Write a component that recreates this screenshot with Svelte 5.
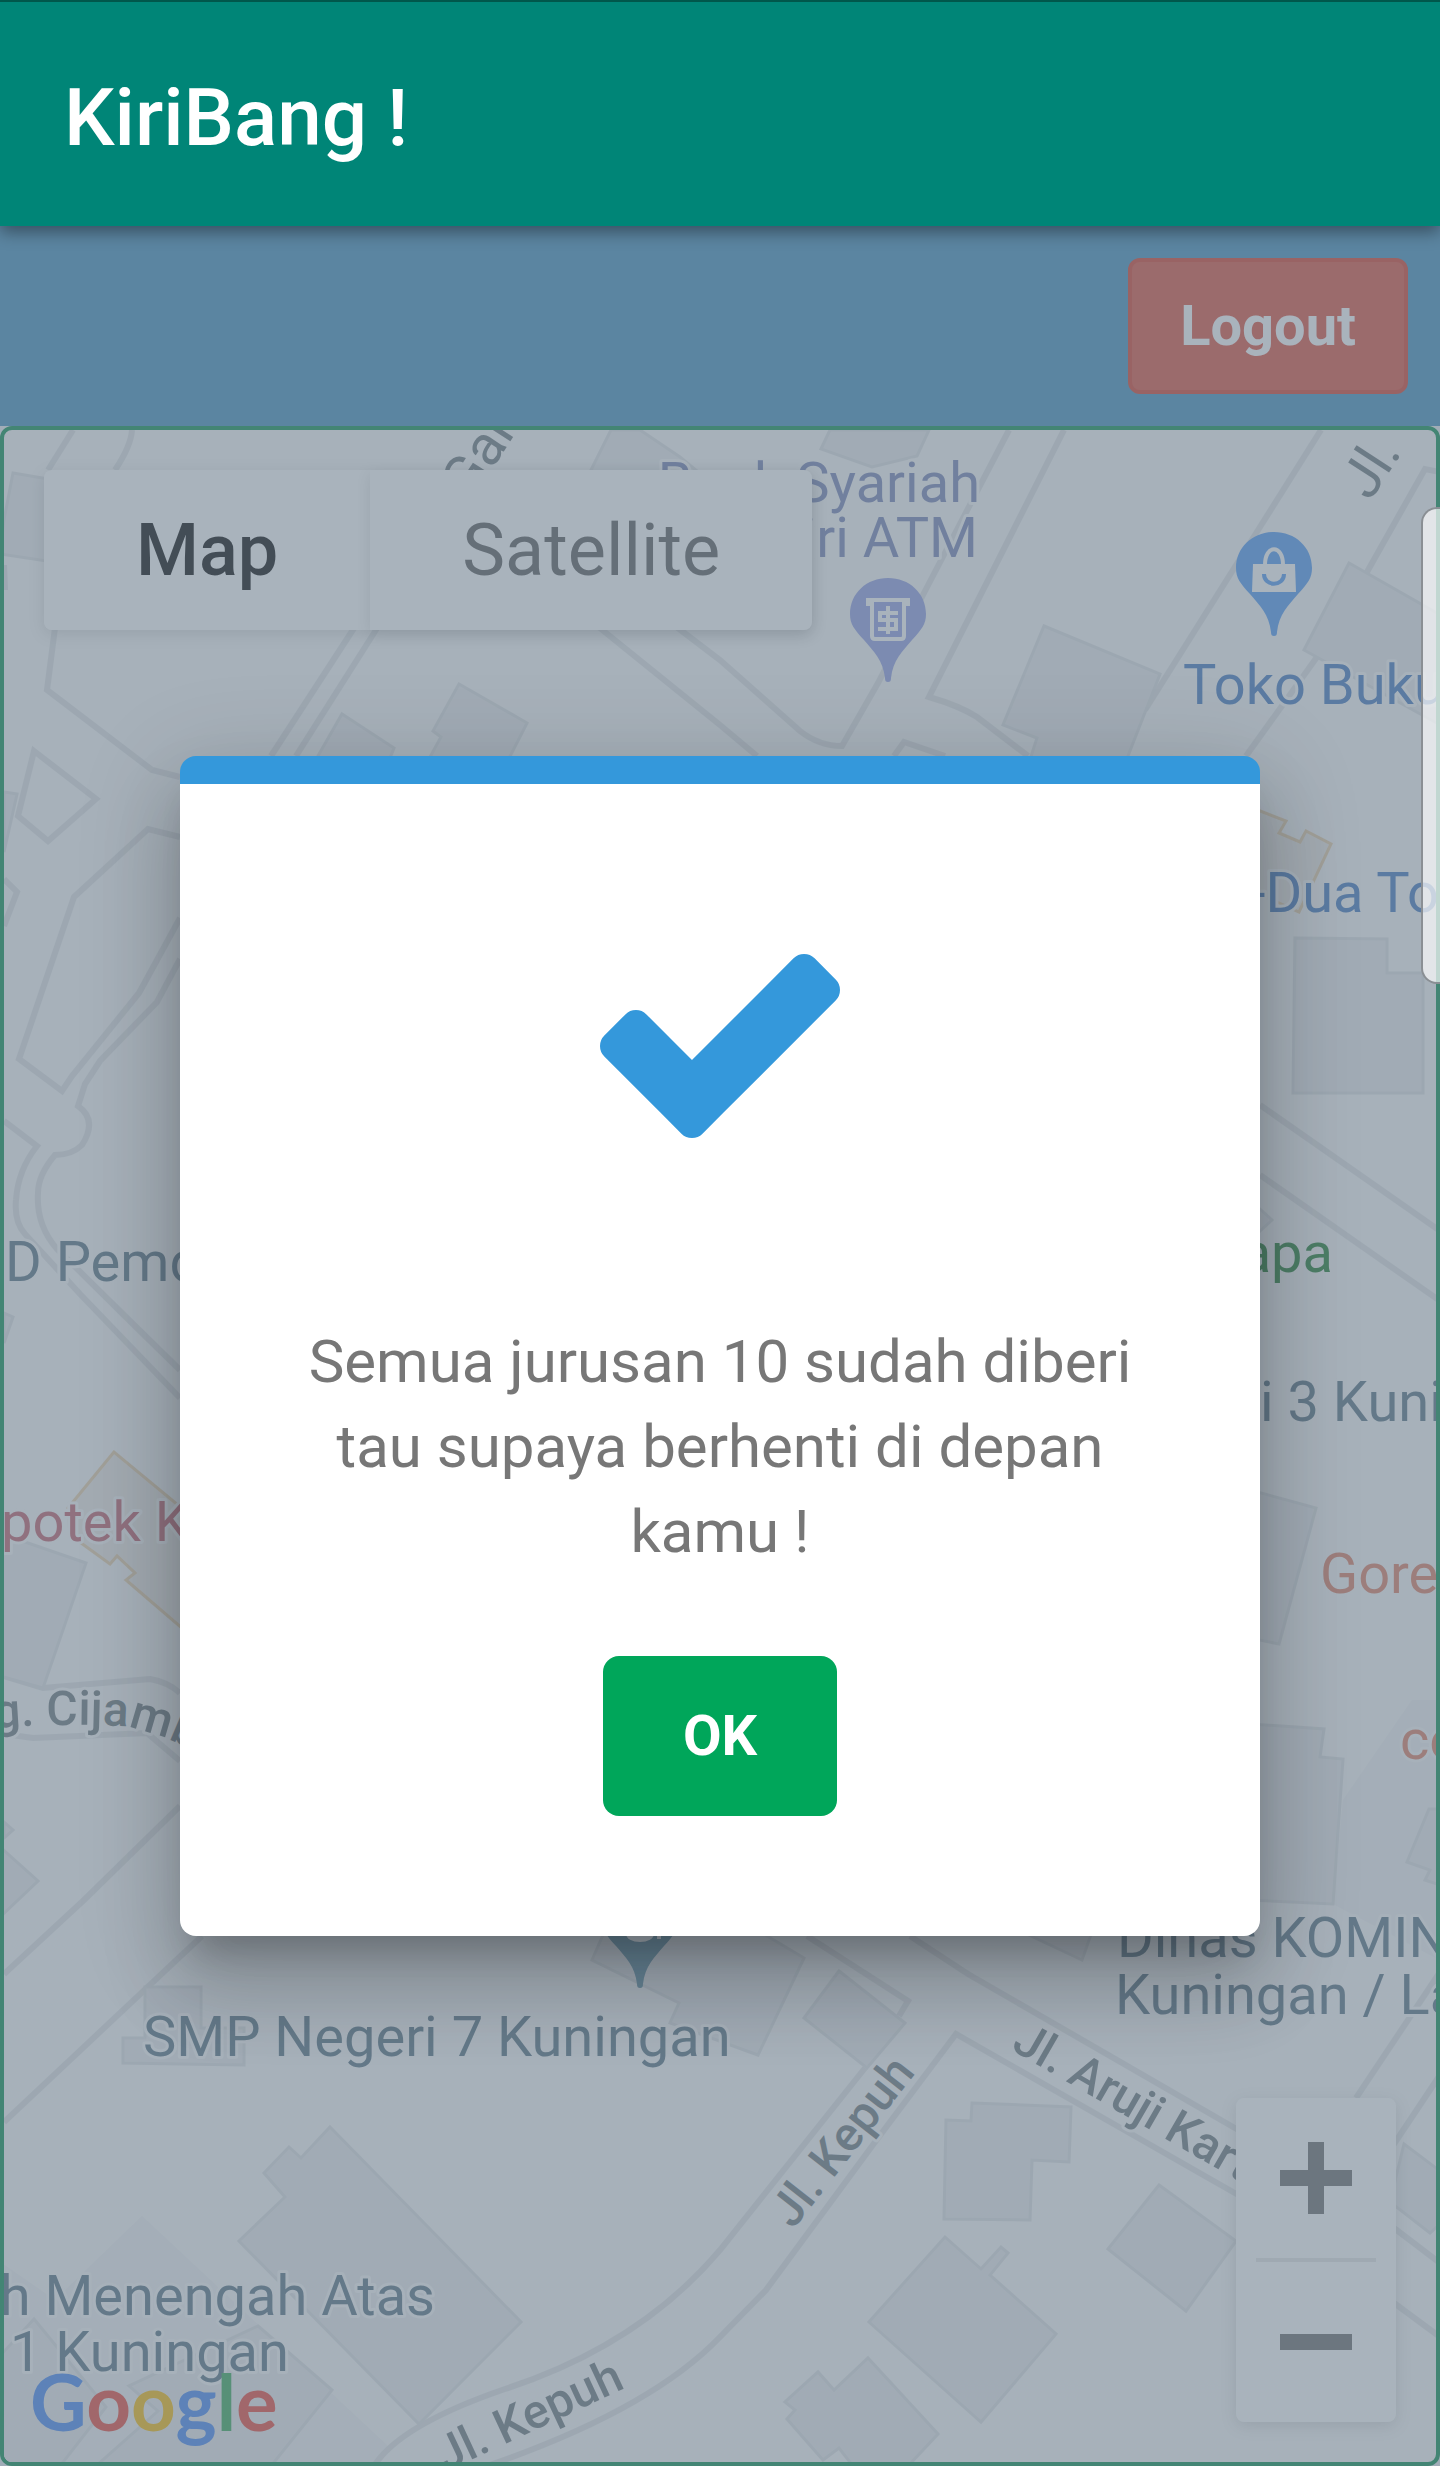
<script lang="ts">
    let dialogOpen = true;
    let mapType = 'Map';

    const mapTypes = ['Map', 'Satellite'];

    const areas = [
        '142,2216 390,2448 374,2466 0,2466 0,2262 55,2300',
        '1440,1700 1412,1700 1343,1800 1333,1904 1440,1960',
    ];

    const roads = [
        'M73 430L48 470',
        'M132 430Q131 446 115 470',
        'M4 565L5 590',
        'M56 620L47 690L152 770L180 777',
        'M34 751L96 799L48 841L18 816Z',
        'M4 879L17 892L4 926',
        'M180 837L148 829L74 897L19 1059L62 1091L72 1076L139 993L180 918',
        'M180 959L157 1002L100 1061L85 1084L78 1106Q98 1120 82 1145Q72 1155 55 1155Q38 1175 38 1193Q36 1225 57 1249L133 1324L180 1370',
        'M4 1121L37 1146Q18 1170 16 1200Q14 1222 25 1234L80 1294L180 1398',
        'M4 1676L43 1688L150 1679Q168 1682 180 1693',
        'M4 1734L33 1738L147 1733L180 1761',
        'M180 1806L84 1900L4 1974',
        'M202 1936L4 2122',
        'M358 622L271 756',
        'M381 622L296 756',
        'M590 620L720 725L757 756',
        'M670 622L720 660L800 731Q819 746 842 746L878 683L924 593L1009 430',
        'M1064 430L929 697Q960 706 977 717L1028 756',
        'M894 756L904 742L945 756',
        'M1321 430L1145 710',
        'M1440 472L1425 469L1367 572',
        'M1317 657L1246 756',
        'M1260 1105L1440 1231',
        'M1260 1175L1440 1301',
        'M807 1936L908 2001L899 2016',
        'M865 2068L720 2250Q640 2345 505 2389Q400 2425 374 2466',
        'M487 2466Q650 2410 720 2337L766 2290L878 2138L956 2034L1119 2127L1240 2196',
        'M910 1936L968 1974L1240 2131',
        'M1440 1972L1356 2098',
        'M1440 2075L1390 2150',
        'M1390 2225L1440 2263',
        'M1390 2300L1440 2337',
    ];

    const buildings = [
        '13,473 60,481 60,563 0,554 4,520',
        '4,792 17,794 4,852',
        '4,1313 13,1317 4,1343',
        '25,1542 86,1563 43,1688 0,1676 0,1538',
        '4,1822 13,1830 4,1838',
        '0,1847 38,1881 0,1917',
        '342,714 394,748 385,770 310,770',
        '459,684 527,723 503,770 423,770 441,737 433,731',
        '611,430 581,490 720,490 680,457 640,430',
        '830,430 821,449 872,467 917,456 929,430',
        '1044,626 1160,674 1124,766 1028,766 1037,738 1003,725',
        '1349,563 1444,617 1444,727 1304,650',
        '1295,938 1387,939 1387,973 1423,973 1423,1093 1293,1093',
        '1250,1200 1272,1220 1250,1240',
        '1250,1490 1316,1508 1279,1644 1250,1638',
        '1250,1724 1324,1729 1320,1757 1343,1759 1333,1904 1250,1900',
        '1440,1809 1429,1809 1407,1862 1430,1870 1425,1880 1440,1885',
        '607,1926 592,1960 679,2003 670,2023 758,2055 804,1958 750,1926',
        '839,1971 905,2023 867,2068 804,2018',
        '1010,1926 1082,1960 1094,1926',
        '972,2103 1071,2107 1069,2162 1032,2160 1030,2220 944,2219 946,2120 971,2121',
        '945,2237 981,2269 1001,2247 1008,2253 990,2275 1056,2334 981,2422 869,2322',
        '1159,2185 1236,2241 1186,2311 1108,2249',
        '868,2358 938,2434 908,2466 853,2466 839,2448 823,2460 787,2419 795,2410 785,2402 818,2372 834,2390',
        '1404,2144 1444,2174 1444,2220 1430,2233 1390,2202',
        '145,1987 201,1987 201,2028 244,2028 244,2065 123,2063 123,2038 145,2038',
        '330,2127 521,2322 419,2424 239,2241 285,2197 264,2173 289,2147 301,2158',
        '34,2319 106,2407 60,2466 0,2466 0,2356',
        '258,2326 332,2390 271,2466 96,2466 158,2411 129,2386',
    ];

    const shops = [
        '114,1452 68,1508 70,1535 88,1548 110,1564 117,1556 135,1573 126,1580 190,1635 190,1515',
        '1250,807 1286,821 1279,833 1300,842 1306,831 1331,844 1299,912 1250,890',
    ];

    const pinShape =
        'M0 104C-2 104-3 103-3 100C-5 82-14 74-24 62C-34 51-38 46-38 36C-38 15-21 0 0 0S38 15 38 36C38 46 34 51 24 62C14 74 5 82 3 100C3 103 2 104 0 104Z';

    function closeDialog() {
        dialogOpen = false;
    }
</script>

<div class="app">
    <header class="toolbar">
        <h1>KiriBang !</h1>
    </header>

    <main class="content">
        <nav class="navbar">
            <button class="logout" type="button">Logout</button>
        </nav>

        <section class="map" aria-label="Map">
            <svg class="tiles" viewBox="4 430 1432 2032" preserveAspectRatio="xMidYMid slice">
                {#each areas as points}
                    <polygon class="area" {points} />
                {/each}
                {#each roads as d}
                    <path class="road" {d} />
                {/each}
                {#each buildings as points}
                    <polygon class="building" {points} />
                {/each}
                {#each shops as points}
                    <polygon class="shop" {points} />
                {/each}

                <g class="label street">
                    <text class="wide" transform="translate(471 502) rotate(-57)">Gar</text>
                    <text class="wide" transform="translate(1370 502) rotate(-57)">Jl.</text>
                    <text transform="translate(793 2230) rotate(-52)">Jl. Kepuh</text>
                    <text transform="translate(1010 2049) rotate(30)">Jl. Aruji Kart</text>
                    <text transform="translate(445 2472) rotate(-25)">Jl. Kepuh</text>
                    <path id="cijambu" d="M-6 1728Q60 1723 120 1726Q160 1732 210 1758" fill="none" stroke="none" />
                    <text><textPath href="#cijambu">g. Cijamb</textPath></text>
                </g>

                <g class="label">
                    <text class="bank" x="980" y="502" text-anchor="end">Bank Syariah</text>
                    <text class="bank" x="978" y="557" text-anchor="end">Mandiri ATM</text>
                    <text class="store" x="1183" y="704">Toko Buku</text>
                    <text class="store" x="1250" y="912">-Dua To</text>
                    <text class="park" x="1333" y="1272" text-anchor="end">Kelapa</text>
                    <text class="food" x="1320" y="1593">Gore</text>
                    <text class="food" x="1400" y="1759">co</text>
                    <text class="pharmacy" x="1" y="1541">potek K</text>
                    <text x="5" y="1281">D Pemd</text>
                    <text x="1260" y="1421">i 3 Kuni</text>
                    <text x="143" y="2056">SMP Negeri 7 Kuningan</text>
                    <text x="1117" y="1957">Dinas KOMIN</text>
                    <text x="1115" y="2014">Kuningan / La</text>
                    <text x="435" y="2315" text-anchor="end">h Menengah Atas</text>
                    <text x="289" y="2371" text-anchor="end">1 Kuningan</text>
                </g>

                <g transform="translate(888 578)">
                    <path d={pinShape} fill="#8e9be3" />
                    <g fill="none" stroke="#fff" stroke-width="4">
                        <path d="M-20 28V22H20V28M-16 24V58Q-16 61-13 61H13Q16 61 16 58V24" />
                        <path d="M10 35H-8V42H8V51H-10M0 28V56" />
                    </g>
                </g>
                <g transform="translate(1274 532)">
                    <path d={pinShape} fill="#4b96f3" />
                    <path d="M-21 32H21L22 60H-22Z" fill="#fff" />
                    <path d="M-9 33C-9 12 9 12 9 33" fill="none" stroke="#fff" stroke-width="4" />
                    <path d="M-10 42C-10 55 10 55 10 42" fill="none" stroke="#4b96f3" stroke-width="4" />
                </g>
                <g transform="translate(640 1884)">
                    <path d={pinShape} fill="#5b8ca3" />
                    <ellipse cx="0" cy="50" rx="14" ry="8" fill="#fff" />
                    <path d="M19 44V55" stroke="#fff" stroke-width="4" />
                </g>

                <text class="google" x="30" y="2431"
                    ><tspan fill="#4285f4">G</tspan><tspan fill="#ea4335">o</tspan><tspan fill="#fbbc05">o</tspan><tspan
                        fill="#4285f4">g</tspan
                    ><tspan fill="#34a853">l</tspan><tspan fill="#ea4335">e</tspan></text
                >
            </svg>

            <div class="map-types">
                {#each mapTypes as type}
                    <button type="button" class:active={mapType === type} on:click={() => (mapType = type)}>
                        {type}
                    </button>
                {/each}
            </div>

            <div class="zoom">
                <button type="button" aria-label="Zoom in">
                    <svg viewBox="0 0 72 72" width="72" height="72">
                        <path d="M28 0H44V28H72V44H44V72H28V44H0V28H28Z" />
                    </svg>
                </button>
                <hr />
                <button type="button" aria-label="Zoom out">
                    <svg viewBox="0 0 72 72" width="72" height="72">
                        <path d="M0 28H72V44H0Z" />
                    </svg>
                </button>
            </div>
        </section>

        {#if dialogOpen}
            <div class="overlay">
                <dialog open aria-labelledby="message">
                    <svg class="check" viewBox="121 334 1550 1188" width="240" height="184" aria-hidden="true">
                        <path
                            d="M1671 566q0 40-28 68l-724 724-136 136q-28 28-68 28t-68-28l-136-136-362-362q-28-28-28-68t28-68l136-136q28-28 68-28t68 28l294 295 656-657q28-28 68-28t68 28l136 136q28 28 28 68z"
                        />
                    </svg>
                    <p id="message">Semua jurusan 10 sudah diberi tau supaya berhenti di depan kamu !</p>
                    <button class="ok" type="button" on:click={closeDialog}>OK</button>
                </dialog>
            </div>
        {/if}

        <div class="scroll-thumb"></div>
    </main>
</div>

<style>
    :global(body) {
        margin: 0;
        background: #ecf0f5;
    }

    .app {
        display: flex;
        flex-direction: column;
        min-height: 100vh;
        font-family: Roboto, sans-serif;
    }

    button {
        font-family: inherit;
        cursor: pointer;
    }

    .toolbar {
        position: relative;
        z-index: 1;
        display: flex;
        align-items: center;
        box-sizing: border-box;
        height: 226px;
        padding: 8px 64px 0;
        border-top: 2px solid #00574b;
        background: #008577;
        box-shadow: 0 6px 16px rgba(0, 0, 0, 0.4);
    }

    .toolbar h1 {
        margin: 0;
        color: #fff;
        font-size: 80px;
        font-weight: 500;
    }

    .content {
        position: relative;
        flex: 1;
        display: flex;
        flex-direction: column;
    }

    .navbar {
        display: flex;
        justify-content: flex-end;
        padding: 32px;
        background: #3c8dbc;
    }

    .logout {
        height: 136px;
        padding: 0 48px;
        border: 4px solid #d73925;
        border-radius: 12px;
        background: #dd4b39;
        color: #fff;
        font-size: 56px;
        font-weight: 700;
    }

    .map {
        position: relative;
        flex: 1;
        min-height: 800px;
        overflow: hidden;
        border: 4px solid #008d4c;
        border-radius: 12px;
        background: #f9f9f9;
    }

    .tiles {
        position: absolute;
        inset: 0;
        width: 100%;
        height: 100%;
    }

    .area {
        fill: #f2f2f4;
    }

    .road {
        fill: none;
        stroke: #e0e2e4;
        stroke-width: 6;
    }

    .building {
        fill: #ebecee;
        stroke: #dfe1e3;
        stroke-width: 3;
    }

    .shop {
        fill: #f1ebe6;
        stroke: #eccfa8;
        stroke-width: 3;
    }

    .label {
        font-size: 56px;
        fill: #546f80;
        stroke: #f9f9f9;
        stroke-width: 6;
        stroke-linejoin: round;
        paint-order: stroke;
    }

    .street {
        font-size: 48px;
        font-weight: 500;
        fill: #687379;
    }

    .wide {
        font-size: 56px;
        font-weight: 400;
    }

    .bank {
        fill: #7380b4;
    }

    .store {
        fill: #3c73bd;
    }

    .park {
        fill: #1b7b2c;
    }

    .food {
        fill: #df7b5f;
    }

    .pharmacy {
        fill: #c05b68;
    }

    .google {
        font-family: Lato, sans-serif;
        font-size: 78px;
        font-weight: 700;
    }

    .map-types {
        position: absolute;
        top: 40px;
        left: 40px;
        display: flex;
        border-radius: 8px;
        box-shadow: 0 4px 16px rgba(0, 0, 0, 0.15);
    }

    .map-types button {
        height: 160px;
        padding: 0 92px;
        border: none;
        background: #fff;
        color: #565656;
        font-size: 72px;
    }

    .map-types button:first-child {
        border-radius: 8px 0 0 8px;
    }

    .map-types button:last-child {
        border-radius: 0 8px 8px 0;
        box-shadow: 0 4px 16px rgba(0, 0, 0, 0.15);
    }

    .map-types .active {
        color: #000;
        font-weight: 500;
    }

    .zoom {
        position: absolute;
        right: 40px;
        bottom: 40px;
        width: 160px;
        border-radius: 8px;
        background: #fff;
        box-shadow: 0 4px 16px rgba(0, 0, 0, 0.15);
    }

    .zoom button {
        display: flex;
        align-items: center;
        justify-content: center;
        width: 100%;
        height: 160px;
        padding: 0;
        border: none;
        background: none;
    }

    .zoom path {
        fill: #666;
    }

    .zoom hr {
        height: 4px;
        margin: 0 20px;
        border: none;
        background: #e6e6e6;
    }

    .overlay {
        position: absolute;
        inset: 0;
        display: flex;
        align-items: center;
        justify-content: center;
        background: rgba(112, 128, 144, 0.6);
    }

    dialog {
        position: static;
        display: flex;
        flex-direction: column;
        align-items: center;
        box-sizing: border-box;
        width: 75%;
        margin: 0;
        padding: 170px 120px 120px;
        border: none;
        border-top: 28px solid #3498db;
        border-radius: 16px;
        background: #fff;
        box-shadow:
            0 28px 32px -16px rgba(0, 0, 0, 0.2),
            0 52px 76px 8px rgba(0, 0, 0, 0.14),
            0 20px 96px 16px rgba(0, 0, 0, 0.12);
    }

    .check {
        fill: #3498db;
    }

    dialog p {
        margin: 181px 0 82px;
        color: #777;
        font-size: 60px;
        line-height: 85px;
        text-align: center;
    }

    .ok {
        height: 160px;
        padding: 0 80px;
        border: none;
        border-radius: 16px;
        background: #00a65a;
        color: #fff;
        font-size: 56px;
        font-weight: 700;
    }

    /* page scroll handle */
    .scroll-thumb {
        position: absolute;
        top: 281px;
        right: 0;
        box-sizing: border-box;
        width: 19px;
        height: 477px;
        border: 2px solid #8a8f94;
        border-right: none;
        border-radius: 16px 0 0 16px;
        background: rgba(255, 255, 255, 0.67);
    }
</style>
